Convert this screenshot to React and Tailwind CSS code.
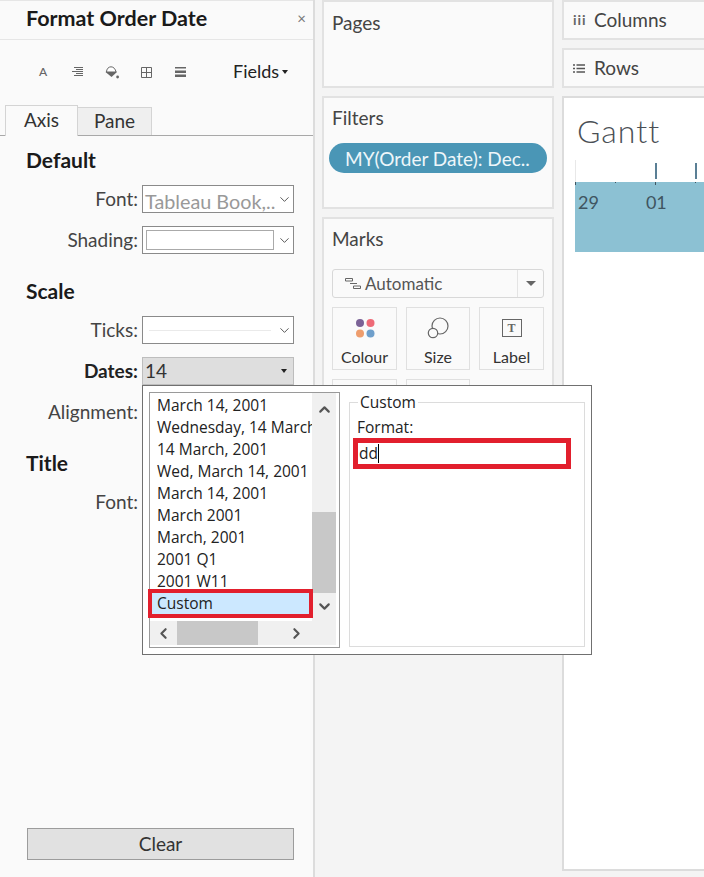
import React from "react";
import { ChevronDown, ChevronUp, ChevronLeft, ChevronRight } from "lucide-react";

const ui = "font-['Lato','Open_Sans',sans-serif]";
const win = "font-['Open_Sans','Noto_Sans',sans-serif]";

function Caret() {
  return <span className="ml-[3px] inline-block h-0 w-0 border-x-[3.5px] border-t-[4px] border-x-transparent border-t-[#222]" />;
}

function FormatIcons() {
  return (
    <div className="flex h-[66px] items-center pb-[2px]">
      <span className="ml-[39px] w-[9px] text-[12px] font-medium leading-none text-[#666]">A</span>
      <svg className="ml-[24px]" width="11" height="10" viewBox="0 0 11 10" stroke="#666" strokeWidth="1">
        <path d="M2 .5h9M4 2.5h7M0 4.5h11M4 6.5h7M2 8.5h9" />
      </svg>
      <svg className="ml-[22px]" width="14" height="13" viewBox="0 0 14 13">
        <path d="M0.5 6L6 2.5 12 6 6.5 11z" fill="#666" />
        <path d="M1.5 6C1.5 3 3.5 .8 6 .8S10.5 3 11 6z" fill="#fff" stroke="#666" strokeWidth="1" />
        <circle cx="12.6" cy="11" r="1.4" fill="#666" />
      </svg>
      <svg className="ml-[22px]" width="11" height="11" viewBox="0 0 11 11" fill="none" stroke="#666" strokeWidth="1">
        <path d="M.5.5h10v10H.5zM5.5.5v10M.5 5.500h10" />
      </svg>
      <svg className="ml-[23px]" width="11" height="10" viewBox="0 0 11 10" fill="#666">
        <path d="M0 0h11v1.5H0zM0 3.500h11V6H0zM0 7.500h11V10H0z" />
      </svg>
      <span className="mb-[2px] ml-[47px] text-[18px] leading-none text-[#222]">Fields</span>
      <Caret />
    </div>
  );
}

function Row({ label, bold, children, className }) {
  return (
    <div className={`flex items-center ${className || ""}`}>
      <span className={`w-[138px] text-right text-[19px] leading-[20px] ${bold ? "font-bold text-[#222]" : "text-[#444]"}`}>{label}</span>
      <div className="ml-[4px] w-[152px]">{children}</div>
    </div>
  );
}

function Select({ children }) {
  return (
    <div className="flex h-[28px] items-center border border-[#8a8a8a] bg-white">
      <div className="min-w-0 flex-1 overflow-hidden whitespace-nowrap">{children}</div>
      <ChevronDown size={15} strokeWidth={1.3} className="mr-[1px] shrink-0 text-[#333]" />
    </div>
  );
}

function FormatPanel() {
  return (
    <div className={`flex h-[877px] w-[315px] shrink-0 flex-col border-r-2 border-[#dcdcdc] bg-[#fafafa] ${ui}`}>
      <div className="flex h-[40px] items-center justify-between border-y border-y-[#e6e6e6] pb-[3px] pl-[26px] pr-[7px]">
        <span className="text-[21.500px] font-bold leading-none text-[#1a1a1a]">Format Order Date</span>
        <span className="text-[15px] leading-none text-[#777]">×</span>
      </div>
      <FormatIcons />
      <div className="flex h-[30px] items-end border-b border-[#a8a8a8] pl-[5px]">
        <div className="relative top-[1px] flex h-[31px] w-[73px] items-center justify-center border border-b-0 border-[#d4d4d4] bg-[#fafafa] pb-[2px] text-[19px] text-[#333]">Axis</div>
        <div className="flex h-[28px] w-[74px] items-center justify-center border border-b-0 border-l-0 border-[#d4d4d4] bg-[#efefef] text-[19px] text-[#333]">Pane</div>
      </div>
      <div className="flex flex-1 flex-col pb-[17px]">
        <h3 className="ml-[26px] mt-[13px] text-[21px] font-bold leading-[22px] text-[#1a1a1a]">Default</h3>
        <Row label="Font:" className="mt-[14px]">
          <Select><div className="ml-[2px] pt-[3px] text-[19.8px] leading-[22px] text-[#999]">Tableau Book,..</div></Select>
        </Row>
        <Row label="Shading:" className="mt-[13px]">
          <Select><div className="ml-[3px] mr-[3px] h-[20px] border border-[#aaa] bg-white" /></Select>
        </Row>
        <h3 className="ml-[26px] mt-[26px] text-[21px] font-bold leading-[22px] text-[#1a1a1a]">Scale</h3>
        <Row label="Ticks:" className="mt-[14px]">
          <Select><div className="mx-[6px] h-[1px] bg-[#eaeaea]" /></Select>
        </Row>
        <Row label="Dates:" bold className="mt-[13px]">
          <div className="flex h-[28px] items-center justify-between border border-[#bdbdbd] bg-[#dedede] pl-[2px] pr-[6px]">
            <span className="mb-[2px] text-[19px] leading-none text-[#333]">14</span>
            <Caret />
          </div>
        </Row>
        <Row label="Alignment:" className="mt-[17px]"><div /></Row>
        <h3 className="ml-[26px] mt-[30px] text-[21px] font-bold leading-[22px] text-[#1a1a1a]">Title</h3>
        <Row label="Font:" className="mt-[18px]"><div /></Row>
        <button className="ml-[27px] mt-auto flex h-[32px] w-[267px] items-center justify-center border border-[#9c9c9c] bg-[#e1e1e1] text-[19px] text-[#333]">Clear</button>
      </div>
    </div>
  );
}

function MarkCard({ label, icon, className }) {
  return (
    <div className={`flex h-[63px] flex-col items-center border border-[#e0e0e0] pt-[9px] ${className || "w-[65px]"}`}>
      <div className="flex h-[22px] items-center">{icon}</div>
      <span className="mt-[8px] text-[16px] leading-[20px] text-[#333]">{label}</span>
    </div>
  );
}

function ShelfColumn() {
  return (
    <div className={`ml-[7px] flex h-[877px] w-[232px] shrink-0 flex-col gap-[8px] ${ui}`}>
      <div className="h-[88px] shrink-0 border-2 border-[#e2e2e2] bg-[#fafafa] pl-[8px] pt-[9px] text-[19px] leading-[24px] text-[#444]">Pages</div>
      <div className="h-[113px] shrink-0 border-2 border-[#e2e2e2] bg-[#fafafa] pl-[5px] pt-[8px]">
        <div className="ml-[3px] text-[19px] leading-[24px] text-[#444]">Filters</div>
        <div className="mt-[13px] flex h-[30px] w-[218px] items-center rounded-full bg-[#4a96b6] pl-[16px] text-[19px] leading-none text-[#eef6fa]">MY(Order Date): Dec..</div>
      </div>
      <div className="h-[420px] shrink-0 border-2 border-[#e2e2e2] bg-[#fafafa] pl-[8px] pt-[8px]">
        <div className="text-[19px] leading-[24px] text-[#444]">Marks</div>
        <div className="mt-[18px] flex h-[29px] w-[212px] items-center rounded-[3px] border border-[#d8d8d8]">
          <svg className="ml-[12px]" width="16" height="11" viewBox="0 0 16 11" fill="none" stroke="#666" strokeWidth="1">
            <path d="M.5.5h7v2.500h-7zM5 5.500h7M8.500 8h7v2.500h-7z" />
          </svg>
          <span className="ml-[4px] flex-1 text-[17px] leading-none text-[#555]">Automatic</span>
          <div className="flex h-full w-[26px] items-center justify-center border-l border-[#e4e4e4]">
            <span className="h-0 w-0 border-x-[5px] border-t-[5px] border-x-transparent border-t-[#666]" />
          </div>
        </div>
        <div className="mt-[9px] grid w-[212px] grid-cols-[65px_64px_65px] gap-[9px]">
          <MarkCard
            label="Colour"
            icon={
              <svg width="20" height="20" viewBox="0 0 20 20">
                <circle cx="5" cy="5" r="4" fill="#7b6296" />
                <circle cx="15.500" cy="5" r="4" fill="#ee6a77" />
                <circle cx="5" cy="15.500" r="4" fill="#ee9d6d" />
                <circle cx="15.500" cy="15.500" r="4" fill="#6f9fcb" />
              </svg>
            }
          />
          <MarkCard
            label="Size"
            className="w-[64px]"
            icon={
              <svg width="22" height="22" viewBox="0 0 22 22" fill="none" stroke="#666" strokeWidth="1.2">
                <circle cx="13" cy="9" r="8" />
                <circle cx="6" cy="16" r="4.700" fill="#fafafa" />
              </svg>
            }
          />
          <MarkCard
            label="Label"
            icon={
              <div className="flex h-[18px] w-[20px] items-center justify-center border border-[#666] font-['Liberation_Serif',serif] text-[12px] font-bold leading-none text-[#666]">T</div>
            }
          />
          <div className="h-[63px] w-[65px] border border-[#e0e0e0]" />
          <div className="h-[63px] w-[64px] border border-[#e0e0e0]" />
        </div>
      </div>
    </div>
  );
}

function ViewColumn() {
  return (
    <div className={`ml-[8px] flex h-[877px] min-w-0 flex-1 flex-col gap-[8px] ${ui}`}>
      <div className="flex h-[40px] shrink-0 items-center border-2 border-r-0 border-[#e2e2e2] bg-[#fafafa] pl-[9px]">
        <span className="w-[12px] text-[14px] font-bold leading-none tracking-[1px] text-[#666]">iii</span>
        <span className="ml-[9px] text-[19px] text-[#444]">Columns</span>
      </div>
      <div className="flex h-[40px] shrink-0 items-center border-2 border-r-0 border-[#e2e2e2] bg-[#fafafa] pl-[9px]">
        <svg width="12" height="9" viewBox="0 0 12 9" stroke="#555" strokeWidth="1.3">
          <path d="M0 1h2M3.500 1H12M0 4.500h2M3.500 4.500H12M0 8h2M3.500 8H12" />
        </svg>
        <span className="ml-[9px] text-[19px] text-[#444]">Rows</span>
      </div>
      <div className="mb-[6px] flex-1 overflow-hidden border-2 border-r-0 border-[#dcdcdc] bg-white pl-[11px]">
        <div className="ml-[2px] mt-[14px] text-[32px] font-light leading-[38px] tracking-[1px] text-[#4a4f55]">Gantt</div>
        <div className="relative h-[32px]">
          <div className="absolute left-0 top-[10px] h-[22px] w-[1px] bg-[#e8e8e8]" />
          <div className="absolute left-[80px] top-[13px] h-[16px] w-[2px] bg-[#5a7f95]" />
          <div className="absolute left-[120px] top-[13px] h-[16px] w-[2px] bg-[#5a7f95]" />
        </div>
        <div className="relative h-[70px] bg-[#8cc1d3] pt-[9px] text-[18px] leading-[22px] text-[#3f5560]">
          <div className="absolute left-0 top-0 h-[3px] w-[1px] bg-[#3f5560]" />
          <div className="absolute left-[40px] top-0 h-[1px] w-[1px] bg-[#3f5560]" />
          <div className="absolute left-[80px] top-0 h-[3px] w-[1px] bg-[#3f5560]" />
          <div className="absolute left-[120px] top-0 h-[1px] w-[1px] bg-[#3f5560]" />
          <span className="ml-[3px]">29</span>
          <span className="ml-[47px]">01</span>
        </div>
      </div>
    </div>
  );
}

function DateFormatPopup() {
  const items = ["March 14, 2001", "Wednesday, 14 March", "14 March, 2001", "Wed, March 14, 2001", "March 14, 2001", "March 2001", "March, 2001", "2001 Q1", "2001 W11"];
  return (
    <div className={`absolute left-[142px] top-[385px] flex h-[270px] w-[450px] gap-[9px] border border-[#707070] bg-white pl-[6px] pt-[6px] ${win}`}>
      <div className="flex h-[256px] w-[191px] flex-col border border-[#9a9a9a]">
        <div className="flex h-[228px] shrink-0">
          <div className="w-[162px] pt-[1px] text-[15.5px] leading-[22px] text-[#222]">
            {items.map((t, i) => (
              <div key={i} className="overflow-hidden whitespace-nowrap pl-[7px]">{t}</div>
            ))}
            <div className="relative z-10 -ml-[2px] -mt-[3px] h-[29px] w-[165px] border-[4px] border-[#e21f2d] bg-[#cce8ff] pl-[5px] leading-[20px]">Custom</div>
          </div>
          <div className="flex w-[24px] flex-col items-center bg-[#f0f0f0] text-[#555]">
            <ChevronUp size={17} strokeWidth={3} className="mt-[8px] shrink-0" />
            <div className="mt-[94px] h-[81px] w-full shrink-0 bg-[#c8c8c8]" />
            <ChevronDown size={17} strokeWidth={3} className="mt-[5px] shrink-0" />
          </div>
        </div>
        <div className="flex h-[24px] w-[186px] items-center bg-[#f0f0f0] text-[#555]">
          <ChevronLeft size={17} strokeWidth={3} className="ml-[5px] shrink-0" />
          <div className="ml-[5px] h-full w-[81px] shrink-0 bg-[#c8c8c8]" />
          <ChevronRight size={17} strokeWidth={3} className="ml-[30px] shrink-0" />
        </div>
      </div>
      <div className="relative mt-[10px] h-[245px] w-[236px] border border-[#dcdcdc] px-[7px] pt-[14px]">
        <span className="absolute left-[8px] top-[-10px] bg-white px-[2px] text-[15.5px] leading-[18px] text-[#222]">Custom</span>
        <div className="text-[15.5px] leading-[20px] text-[#222]">Format:</div>
        <div className="-ml-[4px] mt-[1px] flex h-[31px] w-[218px] items-center border-[5px] border-[#e21f2d] pl-[1px] text-[15.5px] text-[#222]">
          dd<span className="h-[19px] w-[1px] bg-black" />
        </div>
      </div>
    </div>
  );
}

export default function App() {
  return (
    <div className="relative flex h-[877px] w-[704px] overflow-hidden bg-[#f4f4f4]">
      <FormatPanel />
      <ShelfColumn />
      <ViewColumn />
      <DateFormatPopup />
    </div>
  );
}
